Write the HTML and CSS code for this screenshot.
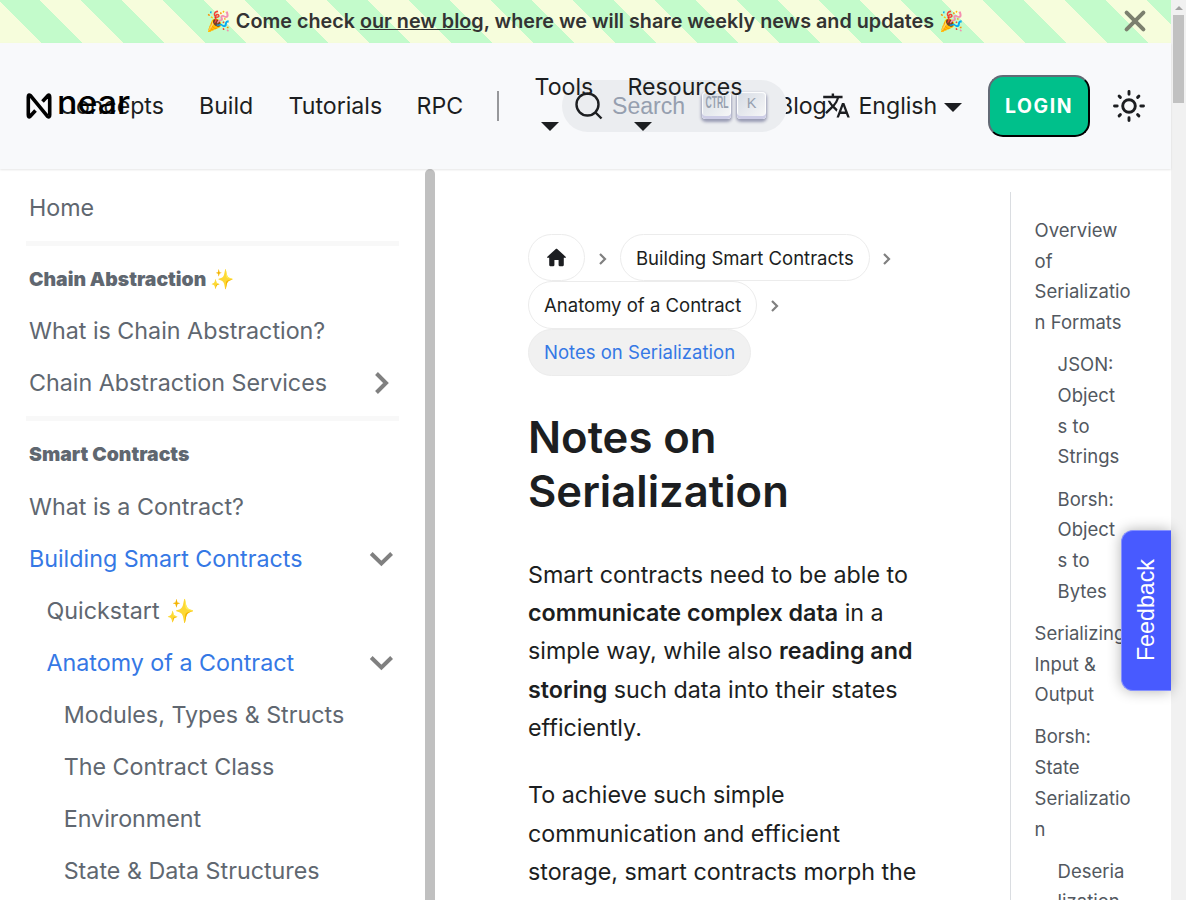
FILE: index.html
```html
<!DOCTYPE html>
<html lang="en">
<head>
<meta charset="utf-8">
<title>Notes on Serialization | NEAR Documentation</title>
<link rel="stylesheet" href="styles.css">
</head>
<body>
<div class="window">
<div class="page">
  <div class="announce">
    <div class="announce-text"><span>🎉 Come check <a class="announce-link">our new blog</a>, where we will share weekly news and updates 🎉</span></div>
    <svg class="announce-close" viewBox="0 0 20 20"><path d="M1.6 1.6 18.4 18.4M18.4 1.6 1.6 18.4"/></svg>
  </div>

  <header class="navbar">
    <div class="brand">
      <svg class="brand-mark" viewBox="0 0 26 26"><path d="M9.500 17.500 4.200 23.300Q2.300 24.800 2.300 22V4Q2.300 .800 4.500 2.700L21.500 23.300Q23.700 25 23.700 22V4Q23.700 1 21.800 2.700L16.500 8.500"/></svg>
      <svg class="brand-word" viewBox="0 0 72 30"><text x="-1" y="24" textLength="73" lengthAdjust="spacingAndGlyphs">near</text></svg>
    </div>
    <nav class="nav-left">
      <a class="nav-link concepts">Concepts</a>
      <a class="nav-link build">Build</a>
      <a class="nav-link tutorials">Tutorials</a>
      <a class="nav-link rpc">RPC</a>
      <i class="divider"></i>
      <a class="nav-drop tools">Tools<i class="caret"></i></a>
      <a class="nav-drop resources">Resources<i class="caret"></i></a>
      <a class="nav-link blog">Blog</a>
    </nav>
    <div class="nav-right">
      <a class="language"><svg class="lang-icon" viewBox="0 0 24 24"><path d="M12.87 15.07l-2.54-2.51.03-.03c1.74-1.94 2.98-4.17 3.71-6.53H17V4h-7V2H8v2H1v1.99h11.17C11.5 7.92 10.44 9.75 9 11.35 8.07 10.32 7.3 9.19 6.69 8h-2c.73 1.63 1.73 3.17 2.98 4.56l-5.09 5.02L4 19l5-5 3.11 3.11.76-2.04zM18.5 10h-2L12 22h2l1.12-3h4.75L21 22h2l-4.5-12zm-2.62 7l1.62-4.33L19.12 17h-3.24z"/></svg><span class="lang-name">English</span><i class="caret"></i></a>
      <button class="login">LOGIN</button>
      <svg class="sun" viewBox="0 0 32 32"><circle cx="16" cy="16" r="6.3"/><path d="M16 1.500v2.700M16 27.800v2.700M1.500 16h2.700M27.800 16h2.700M6.100 6.100l1.300 1.300M24.600 24.600l1.300 1.300M6.100 25.900l1.300-1.300M24.600 7.400l1.300-1.300"/></svg>
    </div>
    <div class="search">
      <svg class="search-icon" viewBox="0 0 28 28"><circle cx="12.5" cy="12.5" r="11"/><path d="M20.500 20.500l6 6"/></svg>
      <span class="search-text">Search</span>
      <kbd class="key"><svg viewBox="0 0 24 14" class="ctrl"><text x="0.5" y="12.3" textLength="23" lengthAdjust="spacingAndGlyphs">CTRL</text></svg></kbd>
      <kbd class="key">K</kbd>
    </div>
  </header>

  <div class="body">
    <aside class="sidebar">
      <div class="menu">
        <a class="item">Home</a>
        <hr class="rule">
        <a class="item head">Chain Abstraction ✨</a>
        <a class="item">What is Chain Abstraction?</a>
        <a class="item">Chain Abstraction Services<svg class="chev" viewBox="0 0 24 24"><path d="M7.500 2.500 17 12l-9.500 9.500"/></svg></a>
        <hr class="rule">
        <a class="item head">Smart Contracts</a>
        <a class="item">What is a Contract?</a>
        <a class="item active">Building Smart Contracts<svg class="chev" viewBox="0 0 24 24"><path d="M2.200 7.500 12.400 17.500 22.600 7.500"/></svg></a>
        <a class="item l2">Quickstart ✨</a>
        <a class="item l2 active">Anatomy of a Contract<svg class="chev" viewBox="0 0 24 24"><path d="M2.200 7.500 12.400 17.500 22.600 7.500"/></svg></a>
        <a class="item l3">Modules, Types &amp; Structs</a>
        <a class="item l3">The Contract Class</a>
        <a class="item l3">Environment</a>
        <a class="item l3">State &amp; Data Structures</a>
      </div>
      <div class="side-bar"></div>
    </aside>

    <main class="article">
      <div class="crumbs">
        <a class="crumb"><svg class="home" viewBox="0 0 24 24"><path d="M10 19v-5h4v5c0 .55.45 1 1 1h3c.55 0 1-.45 1-1v-7h1.7c.46 0 .68-.57.33-.87L12.67 3.6c-.38-.34-.96-.34-1.34 0l-8.36 7.53c-.34.3-.13.87.33.87H5v7c0 .55.45 1 1 1h3c.55 0 1-.45 1-1z"/></svg></a>
        <svg class="sep" viewBox="0 0 10 14"><path d="M2 2l5 5-5 5"/></svg>
        <a class="crumb">Building Smart Contracts</a>
        <svg class="sep" viewBox="0 0 10 14"><path d="M2 2l5 5-5 5"/></svg>
        <a class="crumb">Anatomy of a Contract</a>
        <svg class="sep" viewBox="0 0 10 14"><path d="M2 2l5 5-5 5"/></svg>
        <a class="crumb current">Notes on Serialization</a>
      </div>
      <h1 class="title">Notes on<br>Serialization</h1>
      <p class="para">Smart contracts need to be able to<br><b>communicate complex data</b> in a<br>simple way, while also <b>reading and</b><br><b>storing</b> such data into their states<br>efficiently.</p>
      <p class="para">To achieve such simple<br>communication and efficient<br>storage, smart contracts morph the</p>
    </main>

    <aside class="toc">
      <a class="toc-item">Overview<br>of<br>Serializatio<br>n Formats</a>
      <a class="toc-item sub">JSON:<br>Object<br>s to<br>Strings</a>
      <a class="toc-item sub">Borsh:<br>Object<br>s to<br>Bytes</a>
      <a class="toc-item">Serializing<br>Input &amp;<br>Output</a>
      <a class="toc-item">Borsh:<br>State<br>Serializatio<br>n</a>
      <a class="toc-item sub">Deseria<br>lization</a>
    </aside>
  </div>
  <div class="feedback"><span>Feedback</span></div>
</div>
<div class="scroll"><i class="scroll-up"></i><div class="scroll-thumb"></div></div>
</div>
</body>
</html>
```
FILE: styles.css
```css
* { box-sizing: border-box; }
html { font-size: 23.27px; }
body { margin: 0; overflow: hidden; background: #fff; color: #1c1e21; font-family: Inter, "Liberation Sans", sans-serif; }
.window { display: flex; height: 900px; overflow: hidden; }
.page { position: relative; width: 1171px; display: flex; flex-direction: column; }

.announce { height: 43px; flex: none; display: flex; align-items: center; background: repeating-linear-gradient(45deg, #f6fddc 0 29px, #c3fbcb 29px 58px); }
.announce-text { flex: 1; padding: 0 0 2px 72px; text-align: center; font-size: 19.75px; font-weight: 600; color: #333; white-space: nowrap; }
.announce-link { text-decoration: underline; }
.announce-close { width: 20px; height: 20px; margin: 0 26px 1px 27px; overflow: visible; fill: none; stroke: #7b806e; stroke-width: 4; stroke-linecap: round; }

.navbar { position: relative; z-index: 2; height: 126px; flex: none; display: flex; align-items: center; background: #f8f9fb; box-shadow: 0 1px 2px rgba(0,0,0,.1); font-size: 23.15px; }
.brand { position: absolute; left: 26px; top: 48px; display: flex; align-items: flex-start; }
.brand-mark { width: 26px; height: 26px; margin-top: 2px; fill: none; stroke: #000; stroke-width: 3.6; stroke-linejoin: round; }
.brand-word { width: 72px; height: 30px; margin: -1px 0 0 6px; overflow: visible; font: 500 32px Inter, sans-serif; }
.nav-left { display: flex; align-items: center; padding-left: 59px; width: 815px; height: 100%; white-space: nowrap; }
.nav-link, .nav-drop { flex: none; }
.concepts { width: 140px; }
.build { width: 89.5px; }
.tutorials { width: 128px; }
.rpc { width: 80px; }
.divider { width: 2px; height: 30px; flex: none; background: #97989b; margin-right: 36px; }
.nav-drop { position: relative; z-index: 2; display: flex; flex-direction: column; line-height: 38px; padding-bottom: 13px; }
.tools { width: 93px; }
.resources { width: 150.5px; }
.nav-drop .caret { margin: 16px 0 0 6px; }
.caret { width: 0; height: 0; border: 9.3px solid transparent; border-top-color: #1c1e21; border-bottom: 0; }
.nav-link { padding-bottom: 0.6px; }
.nav-right { flex: 1; display: flex; align-items: center; padding-left: 7px; }
.language { display: flex; align-items: center; width: 166px; }
.lang-icon { width: 29px; height: 29px; flex: none; margin-top: -1px; fill: #1c1e21; }
.lang-name { margin: 0 7px 0.6px 7.4px; }
.language .caret { margin-top: 2px; }
.login { width: 102px; height: 62px; padding: 0; border: 2px outset #1c1e21; border-radius: 15px; background: #00c08b; color: #fff; font: 700 19.4px Inter, sans-serif; letter-spacing: 1.6px; }
.sun { width: 32px; height: 32px; margin-left: 23px; fill: none; stroke: #1c1e21; stroke-width: 2.9; stroke-linecap: round; }
.search { position: absolute; left: 562px; top: 37px; width: 225px; height: 52px; display: flex; align-items: center; border-radius: 26px; background: #ebedf0; padding-left: 13px; }
.search-icon { width: 28px; height: 28px; flex: none; fill: none; stroke: #1c1e21; stroke-width: 2.4; }
.search-text { width: 90px; flex: none; margin-left: 9px; font: 23.1px "Liberation Sans", sans-serif; color: #969faf; }
.key { width: 29px; height: 27px; flex: none; margin: -2px 6px 0 0; border-radius: 4px; display: flex; align-items: center; justify-content: center; background: linear-gradient(-225deg, #d5dbe4, #f8f8f8); box-shadow: inset 0 -3px 0 #cdcde6, inset 0 0 1px 1px #fff, 0 2px 3px 1px rgba(30,35,90,.4); color: #969faf; font: 14.5px "Liberation Sans", sans-serif; padding-bottom: 5px; }
.ctrl { width: 24px; height: 14px; flex: none; overflow: visible; font: 700 16px "Liberation Sans", sans-serif; fill: #969faf; }

.body { flex: 1; display: flex; min-height: 0; }
.sidebar { width: 435px; display: flex; flex: none; }
.menu { width: 425px; padding: 12.6px 26px 0; overflow: hidden; }
.item { display: flex; align-items: center; justify-content: space-between; height: 52.09px; padding: 0 6px 0 3px; font-size: 23.27px; color: #606770; white-space: nowrap; }
.l2 { padding-left: 20.5px; }
.l3 { padding-left: 37.7px; }
.active { color: #3578e5; }
.head { font-size: 19.4px; font-weight: 900; }
.rule { height: 5px; margin: 7px 0; border: 0; background: #f8f8f8; }
.chev { width: 24px; height: 24px; fill: none; stroke: #808080; stroke-width: 4; }
.side-bar { width: 10px; background: #c0c0c0; border-radius: 5px 5px 0 0; }

.article { width: 575px; flex: none; padding: 65px 80px 0 93px; overflow: hidden; }
.crumbs { display: flex; flex-wrap: wrap; align-items: center; }
.crumb { height: 47.4px; padding: 0 15px; border: 1px solid #ececec; border-radius: 24px; display: flex; align-items: center; font-size: 18.55px; white-space: nowrap; }
.crumb.current { background: #f1f1f1; color: #3578e5; }
.home { width: 25px; height: 25.6px; fill: #1c1e21; }
.sep { width: 10px; height: 14px; margin: 2px 12.5px 0 12.5px; fill: none; stroke: #808080; stroke-width: 2.2; }
.title { margin: 35px 0 36.6px; font-size: 43.6px; line-height: 54px; font-weight: 600; }
.para { margin: 0 0 28.6px; font-size: 23.27px; line-height: 38.36px; white-space: nowrap; }
.para b { font-weight: 600; }

.toc { width: 161px; margin-top: 23px; padding: 22.9px 0 0 23.6px; border-left: 1px solid #dadde1; display: flex; flex-direction: column; gap: 11.5px; overflow: hidden; }
.toc-item { flex: none; font-size: 18.5px; line-height: 30.7px; color: #525860; white-space: nowrap; }
.sub { padding-left: 23px; }

.feedback { position: absolute; z-index: 3; right: 0; top: 530px; width: 50px; height: 161px; display: flex; align-items: center; justify-content: center; border: 1px solid #8590ff; border-right: 0; border-radius: 12px 0 0 12px; background: #485aff; box-shadow: 0 0 14px rgba(0,0,0,.3); color: #fff; font: 23.25px "Liberation Sans", sans-serif; }
.feedback span { writing-mode: vertical-rl; transform: rotate(180deg); }
.scroll { width: 15px; background: #f1f1f1; display: flex; flex-direction: column; align-items: center; }
.scroll-up { width: 0; height: 0; margin: 6px 0 5px; border: 4px solid transparent; border-bottom-color: #a3a3a3; border-top: 0; }
.scroll-thumb { width: 11px; height: 88px; background: #c1c1c1; }
```
